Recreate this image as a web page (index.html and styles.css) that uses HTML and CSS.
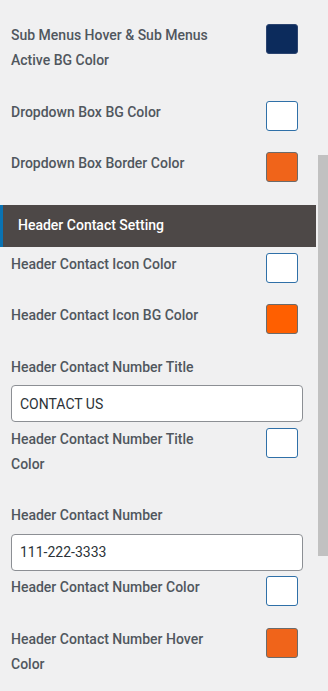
FILE: index.html
```html
<!DOCTYPE html>
<html lang="en">
<head>
  <meta charset="UTF-8" />
  <title>Header Settings</title>
  <link rel="stylesheet" href="styles.css">
</head>
<body>
  <div class="panel">
    <div class="section">
      <div class="color-row">
        <label>Sub Menus Hover &amp; Sub Menus Active BG Color</label>
        <span class="swatch navy"></span>
      </div>
      <div class="color-row">
        <label>Dropdown Box BG Color</label>
        <span class="swatch white"></span>
      </div>
      <div class="color-row">
        <label>Dropdown Box Border Color</label>
        <span class="swatch orange"></span>
      </div>
    </div>

    <h3 class="section-title">Header Contact Setting</h3>

    <div class="section">
      <div class="color-row">
        <label>Header Contact Icon Color</label>
        <span class="swatch white"></span>
      </div>
      <div class="color-row">
        <label>Header Contact Icon BG Color</label>
        <span class="swatch bright"></span>
      </div>
      <div class="text-row">
        <label>Header Contact Number Title</label>
        <input type="text" value="CONTACT US">
      </div>
      <div class="color-row">
        <label>Header Contact Number Title Color</label>
        <span class="swatch white"></span>
      </div>
      <div class="text-row">
        <label>Header Contact Number</label>
        <input type="text" value="111-222-3333">
      </div>
      <div class="color-row">
        <label>Header Contact Number Color</label>
        <span class="swatch white"></span>
      </div>
      <div class="color-row">
        <label>Header Contact Number Hover Color</label>
        <span class="swatch orange"></span>
      </div>
    </div>
  </div>
  <div class="scroll-thumb"></div>
</body>
</html>
```

FILE: styles.css
```css
body {
  margin: 0;
  background: #f0f0f1;
  font-family: Roboto, "Liberation Sans", sans-serif;
  color: #50575e;
  overflow: hidden;
}
.panel {
  width: 316px;
  padding-top: 23px;
}
.section {
  padding: 0 13px 0 11px;
}
label {
  display: block;
  font-size: 14px;
  font-weight: 500;
  line-height: 25px;
}
.color-row {
  display: flex;
  justify-content: space-between;
  align-items: flex-start;
  padding-bottom: 26.5px;
}
.color-row label {
  max-width: 212px;
}
.swatch {
  flex: none;
  box-sizing: border-box;
  width: 32px;
  height: 30px;
  margin: 1px 5px -6px 0;
  border-radius: 3px;
  border: 1px solid #6b6b6b;
}
.navy {
  background: #0c2b5c;
  border-color: #2b4470;
}
.white {
  background: #fff;
  border-color: #2f70a8;
}
.orange {
  background: #f0641a;
}
.bright {
  background: #ff5f00;
}
.section-title {
  margin: 2.5px 0 4.5px;
  height: 42px;
  box-sizing: border-box;
  padding-left: 15px;
  border-left: 3px solid #0a73b3;
  background: #4d4847;
  color: #fff;
  font-size: 14px;
  font-weight: 500;
  line-height: 40px;
}
.text-row {
  padding-bottom: 4.5px;
}
input {
  display: block;
  box-sizing: border-box;
  width: 100%;
  height: 37px;
  margin-top: 5.5px;
  padding: 0 8px;
  border: 1px solid #8c8f94;
  border-radius: 4px;
  background: #fff;
  color: #2c3338;
  font-family: Roboto, "Liberation Sans", sans-serif;
  font-size: 14px;
}
.scroll-thumb {
  position: absolute;
  left: 318px;
  top: 155px;
  width: 10px;
  height: 401px;
  background: #c1c1c1;
}
```
